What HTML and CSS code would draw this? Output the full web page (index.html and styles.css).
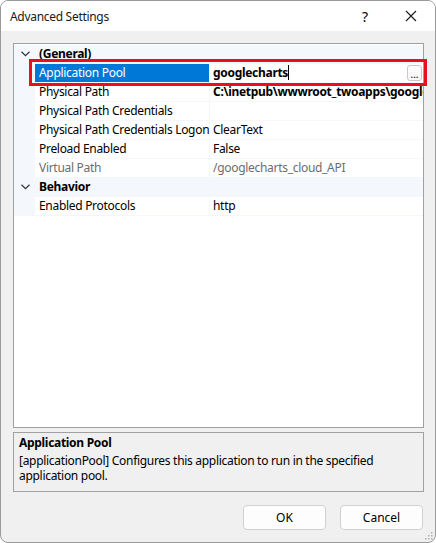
FILE: index.html
```html
<!DOCTYPE html>
<html>
<head>
<meta charset="utf-8">
<title>Advanced Settings</title>
<link rel="stylesheet" href="styles.css">
</head>
<body>
<div class="dialog">
	<div class="titlebar">
		<span class="title">Advanced Settings</span>
		<span class="help">?</span>
		<span class="close"><svg width="12" height="12" viewBox="0 0 12 12"><path d="M1 1L11 11M11 1L1 11" stroke="#1a1a1a" stroke-width="1.1" fill="none"/></svg></span>
	</div>
	<div class="content">
		<div class="grid">
			<div class="cat">
				<span class="chev"><svg width="9" height="6" viewBox="0 0 9 6"><path d="M0.5 0.8L4.5 4.6L8.5 0.8" stroke="#333" stroke-width="1.2" fill="none"/></svg></span>
				<span class="cat-name">(General)</span>
			</div>
			<div class="row selected">
				<span class="gutter"></span>
				<span class="name">Application Pool</span>
				<span class="value strong">googlecharts<span class="caret"></span><span class="dots">...</span></span>
			</div>
			<div class="row">
				<span class="gutter"></span>
				<span class="name">Physical Path</span>
				<span class="value strong">C:\inetpub\wwwroot_twoapps\googlecharts_cloud_API</span>
			</div>
			<div class="row">
				<span class="gutter"></span>
				<span class="name">Physical Path Credentials</span>
				<span class="value"></span>
			</div>
			<div class="row">
				<span class="gutter"></span>
				<span class="name">Physical Path Credentials Logon</span>
				<span class="value">ClearText</span>
			</div>
			<div class="row">
				<span class="gutter"></span>
				<span class="name">Preload Enabled</span>
				<span class="value">False</span>
			</div>
			<div class="row readonly">
				<span class="gutter"></span>
				<span class="name">Virtual Path</span>
				<span class="value">/googlecharts_cloud_API</span>
			</div>
			<div class="cat">
				<span class="chev"><svg width="9" height="6" viewBox="0 0 9 6"><path d="M0.5 0.8L4.5 4.6L8.5 0.8" stroke="#333" stroke-width="1.2" fill="none"/></svg></span>
				<span class="cat-name">Behavior</span>
			</div>
			<div class="row">
				<span class="gutter"></span>
				<span class="name">Enabled Protocols</span>
				<span class="value">http</span>
			</div>
		</div>
		<div class="desc">
			<div class="desc-title">Application Pool</div>
			<div class="desc-text">[applicationPool] Configures this application to run in the specified application pool.</div>
		</div>
		<div class="buttons">
			<button class="btn">OK</button>
			<button class="btn">Cancel</button>
		</div>
	</div>
	<div class="mark"></div>
	<svg class="grip" width="10" height="10" viewBox="0 0 10 10" fill="#b0b0b0">
		<rect x="7" y="1" width="1.5" height="1.5"/>
		<rect x="4" y="4" width="1.5" height="1.5"/><rect x="7" y="4" width="1.5" height="1.5"/>
		<rect x="1" y="7" width="1.5" height="1.5"/><rect x="4" y="7" width="1.5" height="1.5"/><rect x="7" y="7" width="1.5" height="1.5"/>
	</svg>
</div>
</body>
</html>
```
FILE: styles.css
```css
html { margin: 0; background: #fff }
body {

	margin: 0;
	font-family: "Noto Sans", "Open Sans", sans-serif;
	font-size: 12px;
	letter-spacing: -0.3px;
	color: #000;
}

.dialog {

	position: relative;
	width: 436px;
	height: 543px;
	box-sizing: border-box;
	border: 1px solid #9a9a9a;
	border-radius: 8px;
	background: #f0f0f0;
	overflow: hidden;
	display: flex;
	flex-direction: column;
}

/*

	title bar
*/
.titlebar {

	height: 30px;
	background: #fff;
	display: flex;
	align-items: center;
	flex-shrink: 0;
}
.title {

	margin-left: 9px;
	flex: 1;
	color: #1a1a1a;
}
.help {

	font-size: 14px;
	width: 46px;
	text-align: center;
}
.close {

	width: 46px;
	display: flex;
	justify-content: center;
	margin-right: 1px;
}

.content {

	padding: 12px 11px 0 12px;
	display: flex;
	flex-direction: column;
}

/*

	property grid
*/
.grid {

	height: 382px;
	padding-top: 1px;
	border: 1px solid #a0a0a0;
	background: #fff;
	overflow: hidden;
}
.cat, .row {

	height: 19px;
	display: grid;
	grid-template-columns: 21px 174px 214px;
	background: #f4f7fc;
	line-height: 18px;
}
.cat {

	grid-template-columns: 21px 1fr;
}
.chev {

	display: flex;
	align-items: center;
	justify-content: center;
	height: 18px;
	padding-left: 2px;
}
.cat-name {

	font-weight: bold;
	padding-left: 4px;
}
.name, .value {

	background: #fff;
	height: 18px;
	white-space: nowrap;
	overflow: hidden;
}
.name {

	padding-left: 4px;
}
.value {

	margin-left: 1px;
	padding-left: 3px;
	position: relative;
}
.strong {

	font-weight: bold;
}
.selected .name {

	background: #0078d7;
	color: #fff;
}
.readonly .name, .readonly .value {

	color: #6d6d6d;
}
.caret {

	display: inline-block;
	width: 1px;
	height: 15px;
	background: #000;
	vertical-align: -3px;
}
.dots {

	position: absolute;
	right: 1px;
	top: 1px;
	width: 13px;
	height: 14px;
	border: 1px solid #c8c8c8;
	border-radius: 3px;
	background: #fbfbfb;
	font-weight: normal;
	font-size: 10px;
	letter-spacing: 0;
	line-height: 16px;
	text-align: center;
}

/*

	description panel
*/
.desc {

	margin-top: 4px;
	height: 56px;
	border: 1px solid #a0a0a0;
	padding: 2px 5px 0;
	line-height: 15px;
}
.desc-title {

	font-weight: bold;
	margin-bottom: 3px;
}

.buttons {

	display: flex;
	justify-content: flex-end;
	gap: 14px;
	margin-top: 13px;
	padding-right: 1px;
}
.btn {

	width: 83px;
	height: 25px;
	font: inherit;
	letter-spacing: 0;
	color: #000;
	background: #fdfdfd;
	border: 1px solid #d0d0d0;
	border-radius: 4px;
}

/*

	red highlight drawn over the selected row
*/
.mark {

	position: absolute;
	left: 28px;
	top: 58px;
	width: 392px;
	height: 21px;
	border: 3px solid #e8101c;
}
.grip {

	position: absolute;
	right: 1px;
	bottom: 1px;
}
```
